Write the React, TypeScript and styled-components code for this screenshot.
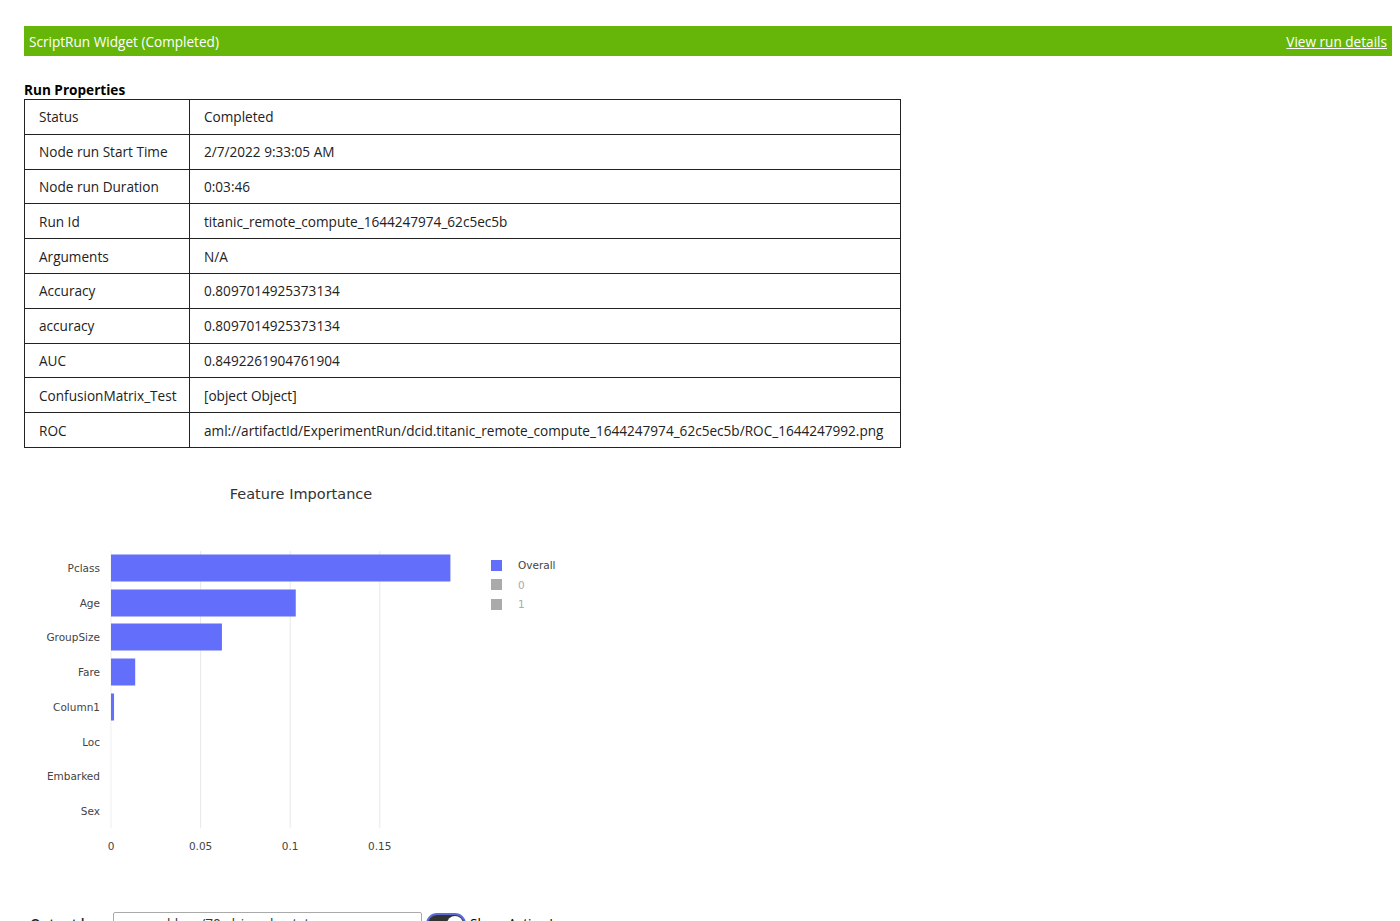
import React from "react";
import styled, { createGlobalStyle } from "styled-components";

const Global = createGlobalStyle`
  html, body { margin: 0; padding: 0; background: #fff; }
  body { font-family: "Open Sans", "Noto Sans", sans-serif; color: #000; overflow: hidden; }
`;

const Page = styled.div`
  padding: 26px 8px 0 24px;
  display: flex;
  flex-direction: column;
`;

const Header = styled.div`
  height: 30px;
  background: #66b60a;
  color: #fff;
  display: flex;
  align-items: center;
  justify-content: space-between;
  padding: 0 5px;
  font-size: 13.6px;
`;

const HeaderLink = styled.a`
  color: #fff;
  text-decoration: underline;
  cursor: pointer;
`;

const SectionTitle = styled.div`
  margin-top: 25px;
  font-weight: 700;
  font-size: 13.6px;
  line-height: 18px;
`;

const Table = styled.table`
  border-collapse: collapse;
  width: 877px;
  font-size: 13.6px;
`;

const Cell = styled.td<{ $key?: boolean }>`
  border: 1px solid #222;
  height: 33.8px;
  padding: 0 0 0 14px;
  width: ${(p) => (p.$key ? "150px" : "auto")};
  white-space: nowrap;
  color: #222;
`;

const ChartSvg = styled.svg`
  margin-top: 14px;
  display: block;
  font-family: "DejaVu Sans", Verdana, sans-serif;
`;

const Controls = styled.div`
  margin-top: 40px;
  display: flex;
  align-items: center;
  gap: 4px;
  font-size: 13.6px;
`;

const Label = styled.span`
  box-sizing: border-box;
  width: 85px;
  padding-left: 6px;
  font-weight: 600;
  color: #222;
`;

const Select = styled.div`
  box-sizing: border-box;
  width: 309px;
  height: 24px;
  border: 1px solid #aaa;
  border-radius: 2px;
  padding-left: 5px;
  display: flex;
  align-items: center;
  color: #333;
`;

const Toggle = styled.div`
  width: 40px;
  height: 22px;
  border-radius: 11px;
  background: #333;
  box-sizing: border-box;
  border: 2px solid #5b6bd8;
  position: relative;
`;

const Knob = styled.span`
  position: absolute;
  right: 1px;
  top: 1px;
  width: 16px;
  height: 16px;
  border-radius: 50%;
  background: #fff;
`;

const rows: [string, string][] = [
  ["Status", "Completed"],
  ["Node run Start Time", "2/7/2022 9:33:05 AM"],
  ["Node run Duration", "0:03:46"],
  ["Run Id", "titanic_remote_compute_1644247974_62c5ec5b"],
  ["Arguments", "N/A"],
  ["Accuracy", "0.8097014925373134"],
  ["accuracy", "0.8097014925373134"],
  ["AUC", "0.8492261904761904"],
  ["ConfusionMatrix_Test", "[object Object]"],
  ["ROC", "aml://artifactId/ExperimentRun/dcid.titanic_remote_compute_1644247974_62c5ec5b/ROC_1644247992.png"],
];

const features: [string, number][] = [
  ["Pclass", 0.1894],
  ["Age", 0.1031],
  ["GroupSize", 0.0619],
  ["Fare", 0.0135],
  ["Column1", 0.0017],
  ["Loc", 0],
  ["Embarked", 0],
  ["Sex", 0],
];

const X0 = 87;
const SCALE = 89.6 / 0.05;
const centers = [106, 141, 175, 210, 245, 280, 314, 349];

function Chart() {
  return (
    <ChartSvg width={600} height={410} viewBox="0 0 600 410">
      <text x={277} y={37} textAnchor="middle" fontSize={14.5} fill="#333">
        Feature Importance
      </text>
      {[0.05, 0.1, 0.15].map((t) => (
        <line key={t} x1={X0 + t * SCALE} x2={X0 + t * SCALE} y1={89} y2={366} stroke="#e8e8e8" strokeWidth={1} />
      ))}
      <line x1={X0} x2={X0} y1={89} y2={366} stroke="#eeeeee" strokeWidth={1} />
      {features.map(([name, v], i) => (
        <g key={name}>
          {v > 0 && (
            <rect x={X0} y={centers[i] - 13.5} width={Math.max(v * SCALE, 2)} height={27} fill="#636efa" />
          )}
          <text x={76} y={centers[i] + 4} textAnchor="end" fontSize={10.5} fill="#444">
            {name}
          </text>
        </g>
      ))}
      {[0, 0.05, 0.1, 0.15].map((t) => (
        <text key={t} x={X0 + t * SCALE} y={388} textAnchor="middle" fontSize={10.5} fill="#444">
          {t === 0 ? "0" : String(t)}
        </text>
      ))}
      <rect x={467} y={98} width={11} height={11} fill="#636efa" />
      <text x={494} y={107} fontSize={10.5} fill="#444">Overall</text>
      <rect x={467} y={117} width={11} height={11} fill="#aaaaaa" />
      <text x={494} y={127} fontSize={10.5} fill="#aaa">0</text>
      <rect x={467} y={137} width={11} height={11} fill="#aaaaaa" />
      <text x={494} y={146} fontSize={10.5} fill="#aaa">1</text>
    </ChartSvg>
  );
}

export default function App() {
  return (
    <>
      <Global />
      <Page>
        <Header>
          <span>ScriptRun Widget (Completed)</span>
          <HeaderLink>View run details</HeaderLink>
        </Header>
        <SectionTitle>Run Properties</SectionTitle>
        <Table>
          <tbody>
            {rows.map(([k, v]) => (
              <tr key={k}>
                <Cell $key>{k}</Cell>
                <Cell>{v}</Cell>
              </tr>
            ))}
          </tbody>
        </Table>
        <Chart />
        <Controls>
          <Label>Output logs</Label>
          <Select>azureml-logs/70_driver_log.txt</Select>
          <Toggle>
            <Knob />
          </Toggle>
          <span>Show Active Logs</span>
        </Controls>
      </Page>
    </>
  );
}
